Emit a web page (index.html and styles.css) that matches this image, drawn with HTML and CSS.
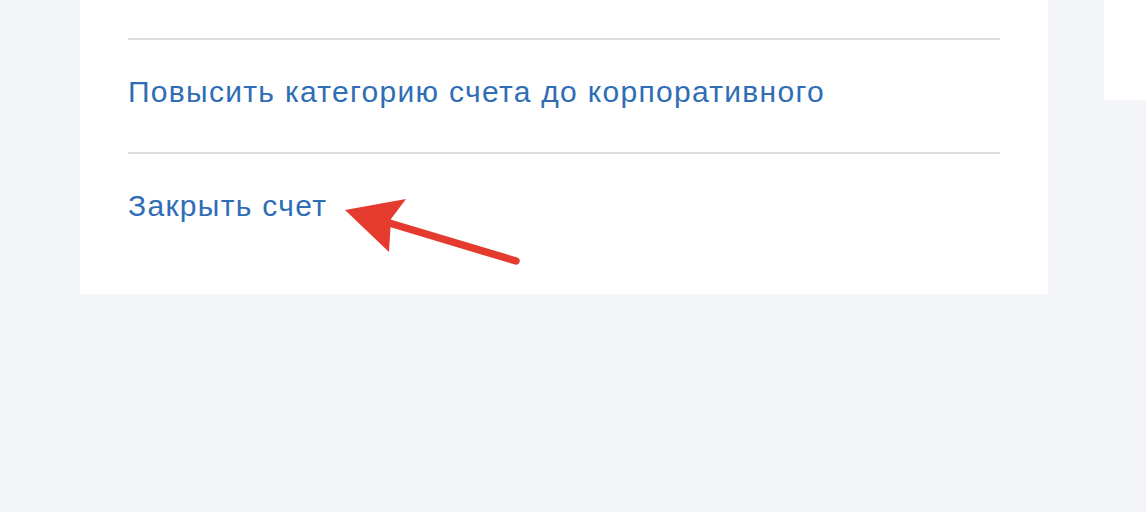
FILE: index.html
```html
<!DOCTYPE html>
<html lang="ru">
<head>
<meta charset="UTF-8">
<meta name="viewport" content="width=device-width, initial-scale=1.0">
<title>Настройки счета</title>
<link rel="stylesheet" href="styles.css">
</head>
<body>
  <div class="page">
    <div class="card">
      <div class="top-space"></div>
      <div class="action-row">
        <a class="action-link" href="#">Повысить категорию счета до корпоративного</a>
      </div>
      <div class="action-row last">
        <a class="action-link" href="#">Закрыть счет</a>
        <!-- Annotation arrow -->
        <svg class="arrow" width="190" height="72" viewBox="0 0 190 72">
          <line x1="42" y1="24" x2="172" y2="63" stroke="#e53b2f" stroke-width="7.5" stroke-linecap="round"/>
          <polygon points="1,12 62,1 47,21 45,54" fill="#e53b2f"/>
        </svg>
      </div>
    </div>
    <div class="side-panel"></div>
  </div>
</body>
</html>
```

FILE: styles.css
```css
body {
  margin: 0;
  background-color: #f4f5f9;
  font-family: "Liberation Sans", Arial, sans-serif;
}

.page {
  display: flex;
  align-items: flex-start;
  height: 512px;
  padding-left: 80px;
}

.card {
  width: 968px;
  background-color: #ffffff;
  padding: 0 48px 28px 48px;
  box-sizing: border-box;
}

.top-space {
  height: 38px;
}

.action-row {
  position: relative;
  border-top: 2px solid #dcdcdc;
  padding: 36px 0 44px 0;
  font-size: 30px;
  line-height: 32px;
}

.action-link {
  color: #2f6db5;
  letter-spacing: 1.3px;
  text-decoration: none;
}

.arrow {
  position: absolute;
  left: 216px;
  top: 44px;
}

.side-panel {
  width: 42px;
  height: 100px;
  margin-left: 56px;
  background-color: #ffffff;
}
```
